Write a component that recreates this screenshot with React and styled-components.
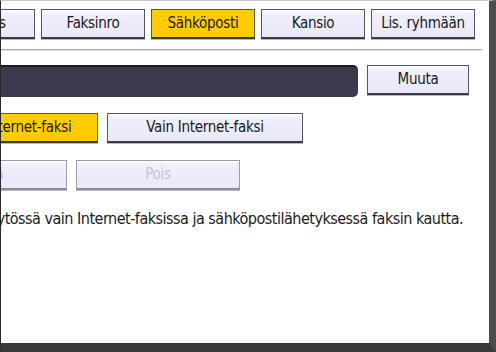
import React from "react";
import styled, { createGlobalStyle } from "styled-components";

const GlobalStyle = createGlobalStyle`
  html, body {
    margin: 0;
    padding: 0;
    background: #ffffff;
  }
  body {
    width: 496px;
    height: 352px;
    overflow: hidden;
  }
`;

const Screen = styled.div`
  width: 496px;
  height: 352px;
  box-sizing: border-box;
  background: #ffffff;
  border-top: 1px solid #c8c8c8;
  border-left: 1px solid #2a2a2a;
  border-right: 7px solid #4c4c4c;
  border-bottom: 9px solid #3a3a3a;
  overflow: hidden;
  font-family: "DejaVu Sans Condensed", "DejaVu Sans", sans-serif;
  color: #1a1a1a;
`;

const Content = styled.div`
  display: flex;
  flex-direction: column;
  padding-top: 8px;
`;

const Row = styled.div`
  display: flex;
  align-items: flex-start;
  gap: ${(p) => p.$gap || 6}px;
  margin-left: ${(p) => p.$offset || 0}px;
  margin-top: ${(p) => p.$top || 0}px;
`;

const Button = styled.div`
  flex: none;
  box-sizing: border-box;
  width: ${(p) => p.$w}px;
  height: 30px;
  display: flex;
  align-items: center;
  justify-content: center;
  padding-bottom: 1px;
  font-size: 15px;
  letter-spacing: -0.3px;
  white-space: nowrap;
  border: 1px solid ${(p) => (p.$disabled ? "#9c9ca6" : "#55555f")};
  border-bottom-width: 2px;
  border-bottom-color: ${(p) => (p.$disabled ? "#8c8c96" : "#3a3a44")};
  box-shadow: 0 1px 0 #b8b8c0;
  background: ${(p) =>
    p.$active
      ? "#ffcc00"
      : "linear-gradient(#ffffff 0%, #f0f0fc 12%, #e8e8f8 100%)"};
  color: ${(p) => (p.$disabled ? "#c4c4d0" : "#1a1a1a")};
`;

const Separator = styled.div`
  width: 481px;
  height: 1px;
  margin-top: 10px;
  background: #a8a8a8;
  border-bottom: 1px solid #e4e4e4;
`;

const NameBar = styled.div`
  flex: none;
  box-sizing: border-box;
  width: 357px;
  height: 32px;
  background: #3a3a4c;
  border-top: 2px solid #1a1a34;
  border-radius: 0 5px 5px 0;
`;

const Note = styled.div`
  margin-top: 19px;
  margin-left: ${(p) => p.$offset}px;
  font-size: 16px;
  white-space: nowrap;
  letter-spacing: -0.5px;
`;

export default function App() {
  return (
    <>
      <GlobalStyle />
      <Screen>
        <Content>
          <Row $offset={-70} $gap={6}>
            <Button $w={104}>Tunnus</Button>
            <Button $w={104}>Faksinro</Button>
            <Button $w={104} $active>
              Sähköposti
            </Button>
            <Button $w={104}>Kansio</Button>
            <Button $w={104}>Lis. ryhmään</Button>
          </Row>
          <Separator />
          <Row $top={14} $gap={9}>
            <NameBar />
            <Button $w={102}>Muuta</Button>
          </Row>
          <Row $top={16} $offset={-117} $gap={9}>
            <Button $w={214} $active>
              Sähköposti/Internet-faksi
            </Button>
            <Button $w={196}>Vain Internet-faksi</Button>
          </Row>
          <Row $top={17} $offset={-99} $gap={9}>
            <Button $w={165} $disabled>
              Päällä
            </Button>
            <Button $w={164} $disabled>
              Pois
            </Button>
          </Row>
          <Note $offset={-142}>
            Tämä toiminto on käytössä vain Internet-faksissa ja sähköpostilähetyksessä faksin kautta.
          </Note>
        </Content>
      </Screen>
    </>
  );
}
